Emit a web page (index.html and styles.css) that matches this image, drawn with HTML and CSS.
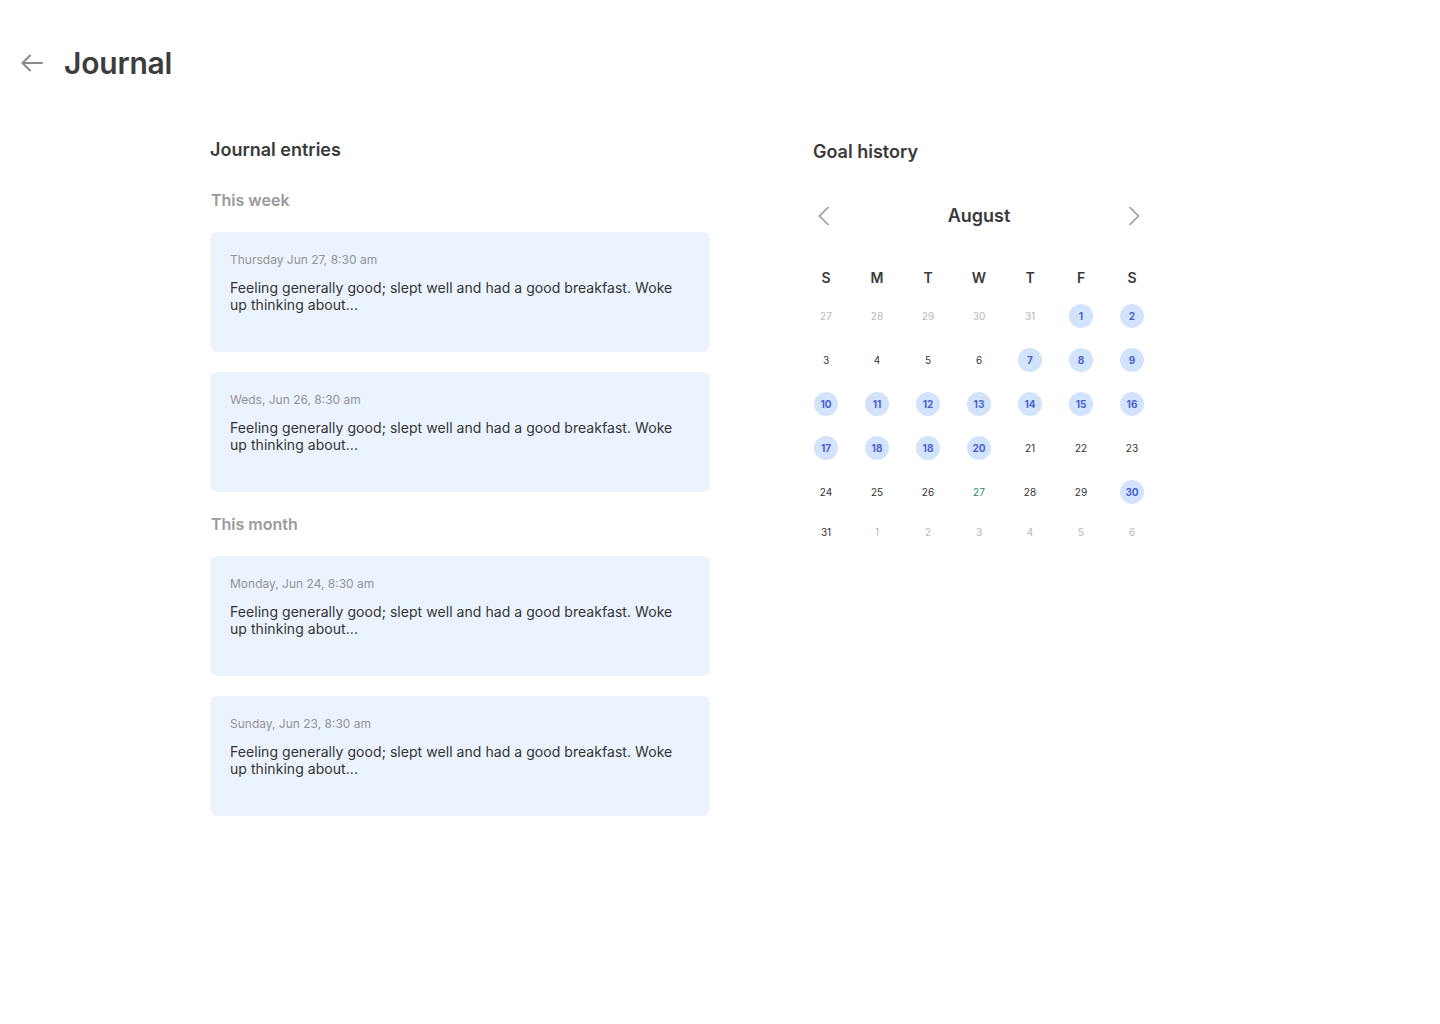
FILE: index.html
```html
<!DOCTYPE html>
<html lang="en">
<head>
<meta charset="utf-8">
<title>Journal</title>
<link rel="stylesheet" href="styles.css">
</head>
<body>
<header class="topbar">
  <button class="back" aria-label="Back">
    <svg width="22" height="18" viewBox="0 0 22 18" fill="none" stroke="#8a8a8a" stroke-width="2" stroke-linecap="round" stroke-linejoin="round"><path d="M21 9H2M9 1.5L1.5 9L9 16.5"/></svg>
  </button>
  <h1 class="title">Journal</h1>
</header>
<main class="content">
  <section class="entries">
    <h2 class="section-title">Journal entries</h2>
    <h3 class="group-title">This week</h3>
    <article class="card">
      <p class="card-date">Thursday Jun 27, 8:30 am</p>
      <p class="card-text">Feeling generally good; slept well and had a good breakfast. Woke up thinking about...</p>
    </article>
    <article class="card">
      <p class="card-date">Weds, Jun 26, 8:30 am</p>
      <p class="card-text">Feeling generally good; slept well and had a good breakfast. Woke up thinking about...</p>
    </article>
    <h3 class="group-title">This month</h3>
    <article class="card">
      <p class="card-date">Monday, Jun 24, 8:30 am</p>
      <p class="card-text">Feeling generally good; slept well and had a good breakfast. Woke up thinking about...</p>
    </article>
    <article class="card">
      <p class="card-date">Sunday, Jun 23, 8:30 am</p>
      <p class="card-text">Feeling generally good; slept well and had a good breakfast. Woke up thinking about...</p>
    </article>
  </section>
  <section class="goals">
    <h2 class="section-title goal-title">Goal history</h2>
    <div class="calendar">
      <div class="cal-head">
        <button class="nav" aria-label="Previous month">
          <svg width="12" height="20" viewBox="0 0 12 20" fill="none" stroke="#999" stroke-width="1.6" stroke-linecap="round" stroke-linejoin="round"><path d="M10 1.5L1.5 10L10 18.5"/></svg>
        </button>
        <div class="month">August</div>
        <button class="nav" aria-label="Next month">
          <svg width="12" height="20" viewBox="0 0 12 20" fill="none" stroke="#999" stroke-width="1.6" stroke-linecap="round" stroke-linejoin="round"><path d="M2 1.5L10.5 10L2 18.5"/></svg>
        </button>
      </div>
      <div class="weekdays">
        <span>S</span><span>M</span><span>T</span><span>W</span><span>T</span><span>F</span><span>S</span>
      </div>
      <div class="days">
        <span class="day muted">27</span><span class="day muted">28</span><span class="day muted">29</span><span class="day muted">30</span><span class="day muted">31</span><span class="day done">1</span><span class="day done">2</span>
        <span class="day">3</span><span class="day">4</span><span class="day">5</span><span class="day">6</span><span class="day done">7</span><span class="day done">8</span><span class="day done">9</span>
        <span class="day done">10</span><span class="day done">11</span><span class="day done">12</span><span class="day done">13</span><span class="day done">14</span><span class="day done">15</span><span class="day done">16</span>
        <span class="day done">17</span><span class="day done">18</span><span class="day done">18</span><span class="day done">20</span><span class="day">21</span><span class="day">22</span><span class="day">23</span>
        <span class="day">24</span><span class="day">25</span><span class="day">26</span><span class="day today">27</span><span class="day">28</span><span class="day">29</span><span class="day done">30</span>
        <span class="day">31</span><span class="day muted">1</span><span class="day muted">2</span><span class="day muted">3</span><span class="day muted">4</span><span class="day muted">5</span><span class="day muted">6</span>
      </div>
    </div>
  </section>
</main>
</body>
</html>
```

FILE: styles.css
```css
* { box-sizing: border-box; }

body {
  margin: 0;
  background: #ffffff;
  font-family: Inter, "Noto Sans", "Liberation Sans", sans-serif;
  color: #333333;
}

button {
  background: none;
  border: 0;
  padding: 0;
  cursor: pointer;
  display: flex;
  align-items: center;
  justify-content: center;
}

.topbar {
  display: flex;
  align-items: center;
  padding: 44px 0 0 20px;
  height: 82px;
}

.back {
  width: 24px;
  height: 20px;
  margin-right: 20px;
}

.title {
  margin: 0;
  font-size: 30px;
  line-height: 36px;
  font-weight: 600;
  color: #3d3d3d;
  letter-spacing: -0.2px;
}

.content {
  display: flex;
  gap: 103px;
  padding: 57px 0 0 210px;
}

.entries {
  width: 500px;
  display: flex;
  flex-direction: column;
}

.section-title {
  margin: 0;
  font-size: 18px;
  line-height: 22px;
  font-weight: 600;
  color: #3a3a3a;
}

.goal-title {
  margin-top: 2px;
}

.group-title {
  margin: 29px 0 22px 1px;
  font-size: 16px;
  line-height: 20px;
  font-weight: 600;
  color: #9a9a9a;
}

.card + .group-title {
  margin-top: 22px;
}

.card {
  height: 120px;
  background: #ebf3fe;
  border-radius: 8px;
  padding: 20px 24px 0 20px;
}

.card + .card {
  margin-top: 20px;
}

.card-date {
  margin: 0;
  font-size: 12px;
  line-height: 16px;
  color: #939393;
}

.card-text {
  margin: 11px 0 0;
  font-size: 14px;
  line-height: 17px;
  letter-spacing: 0.05px;
  color: #333333;
}

.goals {
  display: flex;
  flex-direction: column;
}

.calendar {
  width: 330px;
  margin: 42px 0 0 1px;
}

.cal-head {
  display: flex;
  align-items: center;
  justify-content: space-between;
  height: 22px;
  padding: 0 4px;
}

.nav {
  width: 12px;
  height: 20px;
}

.month {
  font-size: 18px;
  line-height: 22px;
  font-weight: 600;
  color: #3a3a3a;
}

.weekdays,
.days {
  display: grid;
  grid-template-columns: repeat(7, 24px);
  column-gap: 27px;
  justify-items: center;
}

.weekdays {
  margin-top: 42px;
  font-size: 14px;
  line-height: 18px;
  font-weight: 600;
  color: #3a3a3a;
}

.days {
  margin-top: 17px;
  row-gap: 20px;
  align-items: center;
}

.day {
  font-size: 10px;
  line-height: 16px;
  color: #333333;
  text-align: center;
  width: 24px;
}

.day.muted {
  color: #b8b8b8;
}

.day.today {
  color: #1f8a5e;
}

.day.done {
  height: 24px;
  line-height: 24px;
  border-radius: 50%;
  background: #d2e3fc;
  color: #4b5fd1;
  font-weight: 700;
}
```
